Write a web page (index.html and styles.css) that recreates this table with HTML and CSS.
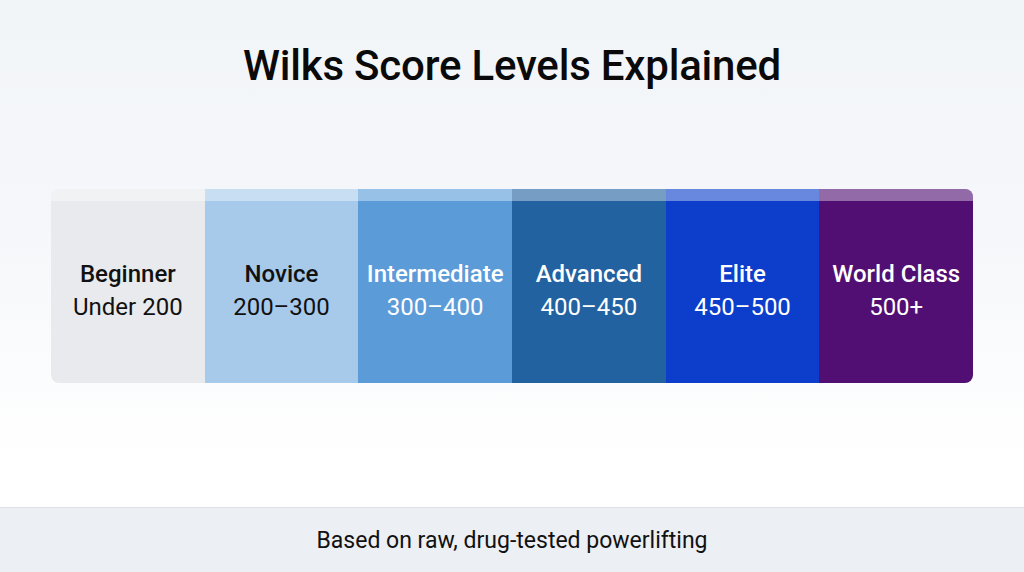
FILE: index.html
```html
<!DOCTYPE html>
<html>
<head>
<meta charset="utf-8">
<link rel="stylesheet" href="styles.css">
</head>
<body>
<div class="page">
  <main class="main">
    <h1 class="title">Wilks Score Levels Explained</h1>
    <div class="scale">
      <div class="level lv-beginner"><span class="name">Beginner</span><span class="range">Under 200</span></div>
      <div class="level lv-novice"><span class="name">Novice</span><span class="range">200–300</span></div>
      <div class="level lv-inter"><span class="name">Intermediate</span><span class="range">300–400</span></div>
      <div class="level lv-adv"><span class="name">Advanced</span><span class="range">400–450</span></div>
      <div class="level lv-elite"><span class="name">Elite</span><span class="range">450–500</span></div>
      <div class="level lv-world"><span class="name">World Class</span><span class="range">500+</span></div>
    </div>
  </main>
  <footer class="footer">Based on raw, drug-tested powerlifting</footer>
</div>
</body>
</html>
```
FILE: styles.css
```css
html, body {
  margin: 0;
  padding: 0;
}
body {
  font-family: Roboto, "Liberation Sans", sans-serif;
  width: 1024px;
  height: 572px;
  overflow: hidden;
}
.page {
  display: flex;
  flex-direction: column;
  height: 572px;
  background: linear-gradient(180deg, #f2f5f8 0%, #f5f7fa 40%, #ffffff 80%, #ffffff 100%);
}
.main {
  flex: 1;
  display: flex;
  flex-direction: column;
  align-items: center;
}
.title {
  margin: 39px 0 0;
  font-size: 42px;
  line-height: 54px;
  font-weight: 500;
  color: #0a0a0a;
  letter-spacing: -0.2px;
}
.scale {
  margin-top: 96px;
  width: 922px;
  height: 194px;
  display: flex;
  border-radius: 8px;
  overflow: hidden;
}
.level {
  flex: 1;
  display: flex;
  flex-direction: column;
  align-items: center;
  justify-content: center;
  padding-top: 9px;
  box-shadow: inset 0 12px 0 rgba(255,255,255,0.38);
}
.name {
  font-size: 24px;
  font-weight: 500;
  line-height: 33px;
}
.range {
  font-size: 24px;
  font-weight: 400;
  line-height: 33px;
}
.lv-beginner { background: #e8eaee; color: #111; }
.lv-novice { background: #a7caeb; color: #111; }
.lv-inter { background: #5a9bd8; color: #fff; }
.lv-adv { background: #2262a0; color: #fff; }
.lv-elite { background: #0c3ecb; color: #fff; }
.lv-world { background: #520f73; color: #fff; }
.footer {
  height: 64px;
  border-top: 1px solid #dde1e6;
  background: #eceff3;
  display: flex;
  align-items: center;
  justify-content: center;
  font-size: 23px;
  color: #111;
}
```
